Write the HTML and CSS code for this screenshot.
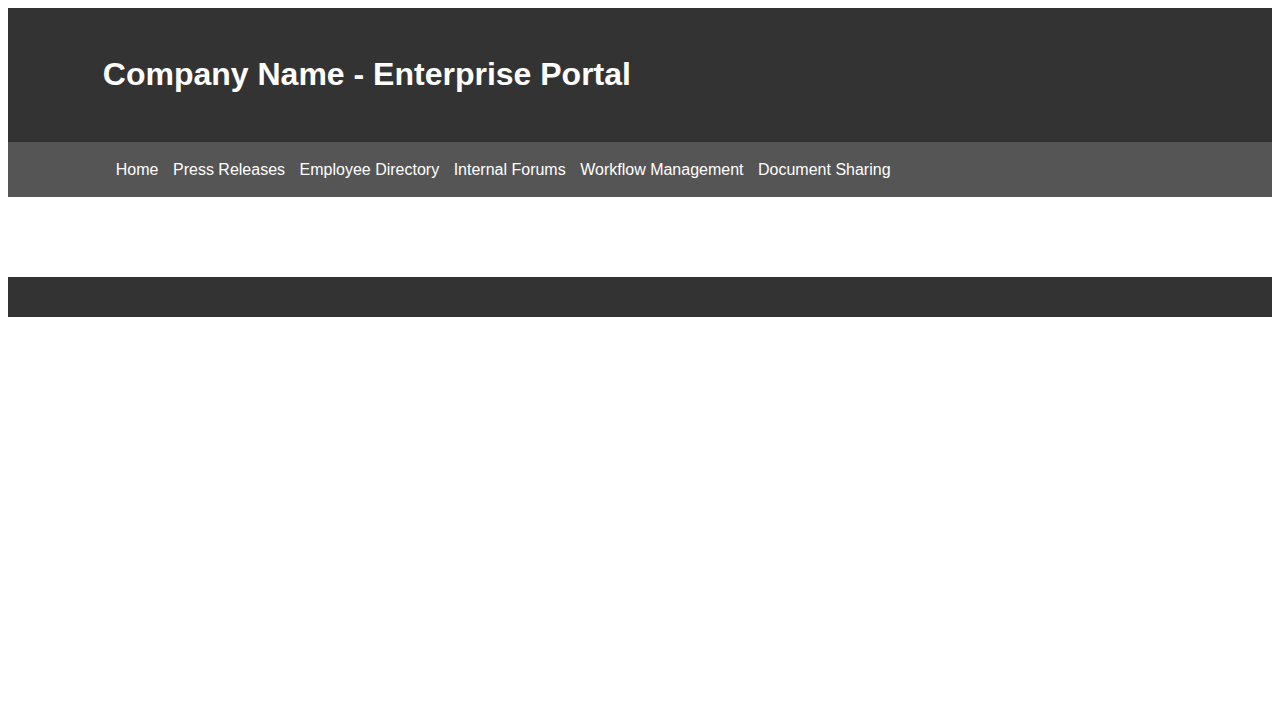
FILE: index.html
```html
<!DOCTYPE html>
<html lang="en">
<head>
<meta charset="utf-8">
<title>Enterprise Portal</title>
<link rel="stylesheet" href="styles.css">
</head>
<body>
<header class="site-header">
  <div class="container">
    <h1 class="site-title">Company Name - Enterprise Portal</h1>
  </div>
</header>
<nav class="site-nav">
  <div class="container">
    <ul class="nav-list">
      <li><a href="#">Home</a></li>
      <li><a href="#">Press Releases</a></li>
      <li><a href="#">Employee Directory</a></li>
      <li><a href="#">Internal Forums</a></li>
      <li><a href="#">Workflow Management</a></li>
      <li><a href="#">Document Sharing</a></li>
    </ul>
  </div>
</nav>
<main class="content"></main>
<footer class="site-footer"></footer>
</body>
</html>
```
FILE: styles.css
```css
body {
  margin: 8px;
  font-family: "Liberation Sans", Arial, sans-serif;
  background: #fff;
}
.container {
  width: 85%;
  margin: 0 auto;
}
.site-header {
  background: #333;
  color: #fff;
  padding: 27px 0;
}
.site-title {
  margin: 21.44px 0;
  font-size: 32px;
  font-weight: bold;
  line-height: 36.8px;
}
.site-nav {
  background: #555;
  padding: 18px 0;
}
.nav-list {
  list-style: none;
  margin: 0;
  padding: 0 0 0 13px;
  display: flex;
  gap: 14.5px;
}
.nav-list a {
  color: #fff;
  text-decoration: none;
  font-size: 16px;
  line-height: 19px;
  display: block;
}
.content {
  height: 80px;
}
.site-footer {
  background: #333;
  height: 40px;
}
```
